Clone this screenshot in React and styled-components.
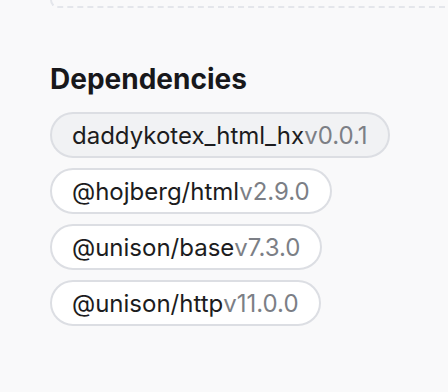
import React from "react";
import styled, { createGlobalStyle } from "styled-components";

const GlobalStyle = createGlobalStyle`
  body {
    margin: 0;
    background: #f9f9fa;
    font-family: Inter, "Noto Sans", sans-serif;
    color: #18181b;
  }
`;

const deps = [
  { name: "daddykotex_html_hx", version: "v0.0.1", active: true },
  { name: "@hojberg/html", version: "v2.9.0" },
  { name: "@unison/base", version: "v7.3.0" },
  { name: "@unison/http", version: "v11.0.0" },
];

function App() {
  return (
    <Page>
      <GlobalStyle />
      <DropZone />
      <Section>
        <Title>Dependencies</Title>
        <ChipList>
          {deps.map((d) => (
            <Chip key={d.name} active={d.active}>
              {d.name}
              <Version>{d.version}</Version>
            </Chip>
          ))}
        </ChipList>
      </Section>
    </Page>
  );
}

export default App;

const Page = styled.div`
  height: 392px;
  overflow: hidden;
  padding-left: 50px;
`;

const DropZone = styled.div`
  height: 40px;
  margin-top: -36px;
  border: 2px dashed #e4e6eb;
  border-right: none;
  border-bottom-left-radius: 8px;
`;

const Section = styled.div`
  padding-top: 54px;
`;

const Title = styled.h2`
  margin: 0 0 16px;
  font-size: 28px;
  font-weight: 700;
  line-height: 34px;
  color: #18181b;
`;

const ChipList = styled.div`
  display: flex;
  flex-direction: column;
  align-items: flex-start;
  gap: 10px;
`;

const Chip = styled.div`
  display: flex;
  align-items: center;
  height: 46px;
  box-sizing: border-box;
  padding: 0 20px;
  border: 2px solid #dcdee3;
  border-radius: 23px;
  background: ${(p) => (p.active ? "#f1f2f4" : "#ffffff")};
  font-size: 24px;
  color: #1c1c20;
`;

const Version = styled.span`
  color: #7c7f86;
`;
